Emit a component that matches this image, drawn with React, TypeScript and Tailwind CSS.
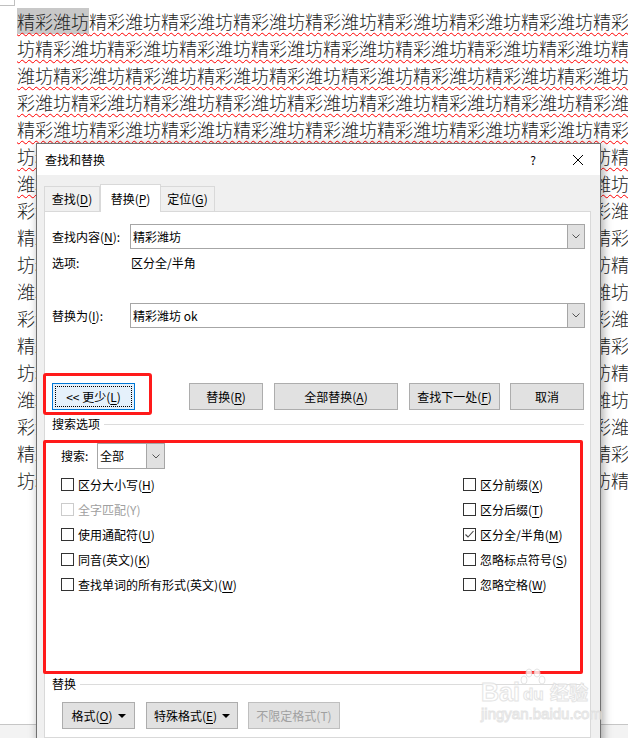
import React from 'react';

const WORD = '精彩潍坊';
const LINES = Array.from({ length: 18 }, (_, i) =>
  Array.from({ length: 35 }, (_, k) => WORD[(i * 35 + k) % 4]).join('')
);

function Key({ c }: { c: string }) {
  return <span className="underline decoration-1 underline-offset-[2px]">{c}</span>;
}

function Chevron() {
  return (
    <svg width="8" height="5" viewBox="0 0 8 5">
      <path d="M0.5 0.5 L4 4 L7.5 0.5" fill="none" stroke="#555" strokeWidth="1" />
    </svg>
  );
}

function Caret() {
  return (
    <svg width="8" height="4" viewBox="0 0 8 4" className="ml-[5px]">
      <path d="M0 0 L8 0 L4 4 Z" fill="#000" />
    </svg>
  );
}

function Combo({ value, className, btn = 'w-[17px]' }: { value: string; className: string; btn?: string }) {
  return (
    <div className={`flex h-[25px] items-stretch border border-[#a6a6a6] bg-white ${className}`}>
      <div className="flex flex-1 items-center pl-[2px]">{value}</div>
      <div className={`flex items-center justify-center border-l border-[#a6a6a6] bg-[#e1e1e1] ${btn}`}>
        <Chevron />
      </div>
    </div>
  );
}

function Btn({
  children,
  className = '',
  disabled = false,
}: {
  children: React.ReactNode;
  className?: string;
  disabled?: boolean;
}) {
  return (
    <div
      className={`flex h-[27px] items-center justify-center border bg-[#e1e1e1] ${
        disabled ? 'border-[#bfbfbf] text-[#a0a0a0]' : 'border-[#adadad]'
      } ${className}`}
    >
      {children}
    </div>
  );
}

function Check({
  children,
  checked = false,
  disabled = false,
}: {
  children: React.ReactNode;
  checked?: boolean;
  disabled?: boolean;
}) {
  return (
    <div className={`flex h-[25px] items-center ${disabled ? 'text-[#a0a0a0]' : ''}`}>
      <span
        className={`flex h-[13px] w-[13px] items-center justify-center border bg-white ${
          disabled ? 'border-[#cccccc]' : 'border-[#333333]'
        }`}
      >
        {checked && (
          <svg width="11" height="11" viewBox="0 0 11 11">
            <path d="M1.5 5.5 L4 8 L9.5 2" fill="none" stroke="#444" strokeWidth="1.1" />
          </svg>
        )}
      </span>
      <span className="ml-[4px]">{children}</span>
    </div>
  );
}

function GroupHeader({ title }: { title: string }) {
  return (
    <div className="flex h-[16px] items-center pl-[7px] pr-[6px]">
      <span>{title}</span>
      <div className="ml-[4px] flex-1 border-t border-[#dcdcdc]" />
    </div>
  );
}

function Dialog() {
  return (
    <div className="absolute left-[36px] top-[143px] h-[620px] w-[565px] border border-[#707070] bg-[#f0f0f0] text-[12px] leading-[16px] text-black shadow-[2px_2px_9px_rgba(0,0,0,0.35)]">
      {/* title bar */}
      <div className="flex h-[31px] items-center bg-white pl-[8px]">
        <span>查找和替换</span>
        <span className="ml-auto w-[12px] text-center">?</span>
        <svg width="10" height="10" viewBox="0 0 10 10" className="ml-[34px] mr-[17px]">
          <path d="M0 0 L10 10 M10 0 L0 10" stroke="#000" strokeWidth="1" />
        </svg>
      </div>

      {/* tabs */}
      <div className="mt-[9px] flex h-[27px] items-end pl-[7px]">
        <div className="flex h-[25px] w-[56px] items-center justify-center border border-b-0 border-[#d9d9d9]">
          查找(<Key c="D" />)
        </div>
        <div className="relative z-10 -mb-px flex h-[28px] w-[61px] items-center justify-center border border-b-0 border-[#d9d9d9] bg-white">
          替换(<Key c="P" />)
        </div>
        <div className="flex h-[25px] w-[54px] items-center justify-center border border-b-0 border-l-0 border-[#d9d9d9]">
          定位(<Key c="G" />)
        </div>
      </div>

      {/* panel */}
      <div className="ml-[7px] h-[527px] w-[547px] border border-[#d9d9d9] bg-white">
        <div className="mt-[12px] flex items-center pl-[7px]">
          <span className="w-[78px]">
            查找内容(<Key c="N" />):
          </span>
          <Combo value="精彩潍坊" className="w-[455px]" />
        </div>

        <div className="mt-[6px] flex h-[16px] items-center pl-[7px]">
          <span className="w-[79px]">选项:</span>
          <span>区分全/半角</span>
        </div>

        <div className="mt-[32px] flex items-center pl-[7px]">
          <span className="w-[78px]">
            替换为(<Key c="I" />):
          </span>
          <Combo value="精彩潍坊 ok" className="w-[455px]" />
        </div>

        <div className="mt-[55px] flex pl-[7px]">
          <div className="relative">
            <div className="relative flex h-[27px] w-[83px] items-center justify-center border border-[#0078d7] bg-[#e5f1fb]">
              <div className="absolute inset-[2px] border border-dotted border-black" />
              &lt;&lt; 更少(<Key c="L" />)
            </div>
            <div className="absolute -bottom-[5px] -left-[9px] -right-[17px] -top-[10px] rounded-[3px] border-[3px] border-[#ff1a1a]" />
          </div>
          <Btn className="ml-[54px] w-[74px]">
            替换(<Key c="R" />)
          </Btn>
          <Btn className="ml-[11px] w-[124px]">
            全部替换(<Key c="A" />)
          </Btn>
          <Btn className="ml-[11px] w-[91px]">
            查找下一处(<Key c="F" />)
          </Btn>
          <Btn className="ml-[10px] w-[74px]">取消</Btn>
        </div>

        <div className="mt-[6px]">
          <GroupHeader title="搜索选项" />
        </div>

        <div className="relative h-[231px] pl-[16px]">
          <div className="absolute -left-[2px] -top-[3px] h-[234px] w-[540px] rounded-[2px] border-[3px] border-[#ff1a1a]" />
          <div className="mt-[11px] flex h-[26px] items-center">
            <span className="w-[36px]">搜索:</span>
            <Combo value="全部" className="h-[26px] w-[68px]" btn="w-[18px]" />
          </div>
          <div className="mt-[3px] grid grid-cols-[402px_1fr]">
            <Check>
              区分大小写(<Key c="H" />)
            </Check>
            <Check>
              区分前缀(<Key c="X" />)
            </Check>
            <Check disabled>全字匹配(Y)</Check>
            <Check>
              区分后缀(<Key c="T" />)
            </Check>
            <Check>
              使用通配符(<Key c="U" />)
            </Check>
            <Check checked>
              区分全/半角(<Key c="M" />)
            </Check>
            <Check>
              同音(英文)(<Key c="K" />)
            </Check>
            <Check>
              忽略标点符号(<Key c="S" />)
            </Check>
            <Check>
              查找单词的所有形式(英文)(<Key c="W" />)
            </Check>
            <Check>
              忽略空格(<Key c="W" />)
            </Check>
          </div>
        </div>

        <div className="mt-[2px]">
          <GroupHeader title="替换" />
        </div>

        <div className="mt-[10px] flex pl-[17px]">
          <Btn className="w-[73px]">
            格式(<Key c="O" />)
            <Caret />
          </Btn>
          <Btn className="ml-[11px] w-[92px]">
            特殊格式(<Key c="E" />)
            <Caret />
          </Btn>
          <Btn disabled className="ml-[10px] w-[92px]">
            不限定格式(T)
          </Btn>
        </div>
      </div>
    </div>
  );
}

function Watermark() {
  const stroke = 'text-white [-webkit-text-stroke:1px_#dedede]';
  return (
    <div className="pointer-events-none absolute left-[481px] top-[668px] flex flex-col font-['Liberation_Sans','Noto_Sans_CJK_SC',sans-serif] opacity-80">
      <div className="flex items-end">
        <span className={`text-[25px] font-bold leading-[24px] ${stroke}`}>Bai</span>
        <div className="relative h-[36px] w-[28px]">
          <svg width="30" height="20" viewBox="0 0 30 20" className="absolute -left-[2px] top-0">
            <ellipse cx="6" cy="12" rx="3" ry="4" fill="#fff" stroke="#dedede" />
            <ellipse cx="11" cy="5" rx="3" ry="4" fill="#fff" stroke="#dedede" />
            <ellipse cx="19" cy="5" rx="3" ry="4" fill="#fff" stroke="#dedede" />
            <ellipse cx="24" cy="12" rx="3" ry="4" fill="#fff" stroke="#dedede" />
          </svg>
          <span className={`absolute bottom-0 left-[3px] text-[17px] font-bold leading-[18px] ${stroke}`}>du</span>
        </div>
        <span className={`ml-[2px] font-['Noto_Sans_CJK_SC',sans-serif] text-[19px] font-bold leading-[24px] ${stroke}`}>
          经验
        </span>
      </div>
      <span className={`mt-[3px] text-[15px] leading-[14px] ${stroke}`}>jingyan.baidu.com</span>
    </div>
  );
}

export default function App() {
  return (
    <div className="relative h-[738px] w-[628px] overflow-hidden bg-[#f3f3f3] font-['Noto_Sans_CJK_SC',sans-serif]">
      <div className="relative h-[725px] border-b border-[#c6c6c6] bg-white pl-[17px] pt-[8px] text-[18px] font-light leading-[27px] text-[#222]">
        <div className="absolute left-0 top-0 h-[6px] w-[15px] border-b border-r border-[#c0c0c0]" />
        {LINES.map((line, i) => (
          <div
            key={i}
            className={`whitespace-nowrap ${
              i < 7 ? 'underline decoration-[#ff0000] decoration-wavy decoration-1 underline-offset-[3px]' : ''
            }`}
          >
            {i === 0 ? (
              <>
                <span className="bg-[#c8c8c8]">{line.slice(0, 4)}</span>
                {line.slice(4)}
              </>
            ) : (
              line
            )}
          </div>
        ))}
      </div>
      <Dialog />
      <Watermark />
    </div>
  );
}
